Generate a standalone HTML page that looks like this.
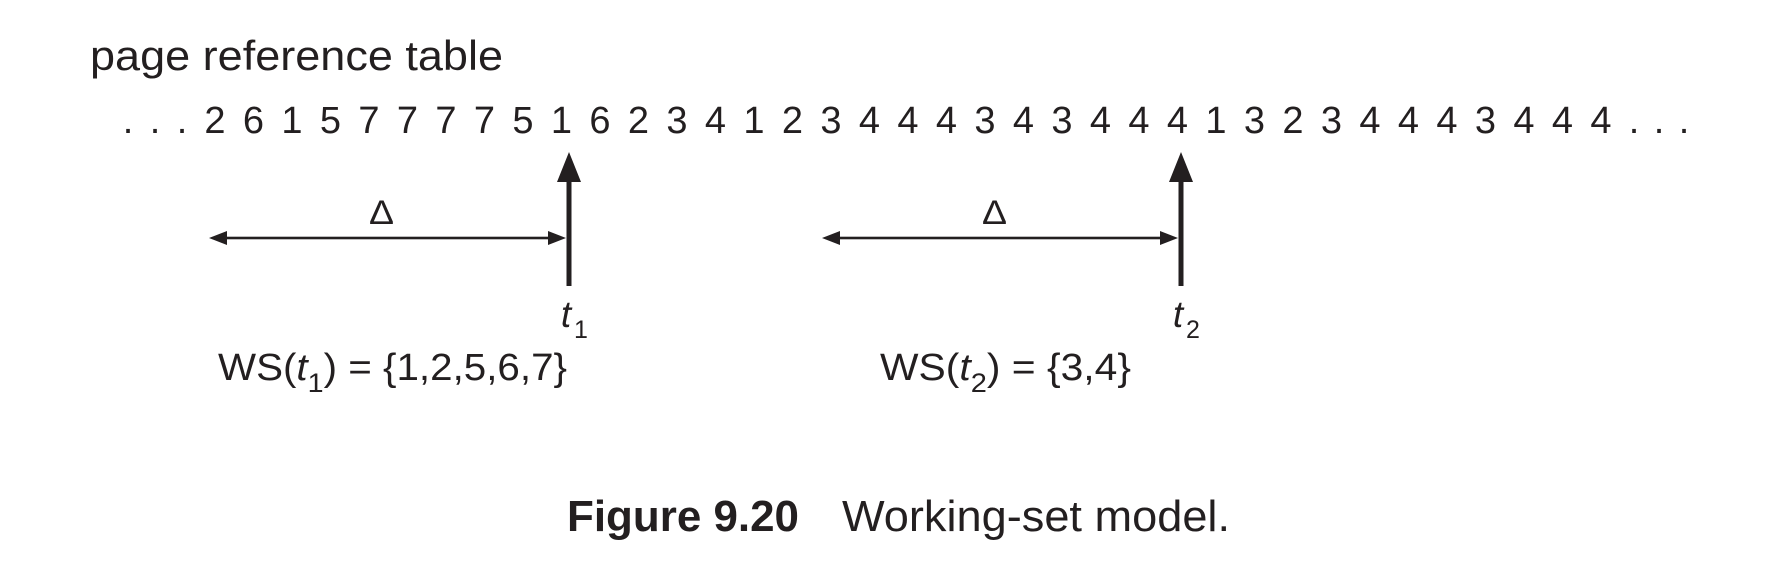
<!DOCTYPE html>
<html><head><meta charset="utf-8"><style>
html,body{margin:0;padding:0;background:#fff;width:1774px;height:584px;overflow:hidden}
svg{display:block}
text{font-family:"Liberation Sans",sans-serif;fill:#231f20}
</style></head><body>
<svg width="1774" height="584" viewBox="0 0 1774 584" xmlns="http://www.w3.org/2000/svg">
<text x="90" y="70" font-size="42" textLength="413" lengthAdjust="spacingAndGlyphs">page reference table</text>
<g font-size="38" text-anchor="middle">
<text x="128" y="133">.</text><text x="155" y="133">.</text><text x="182" y="133">.</text>
<text x="215" y="133">2</text><text x="253.5" y="133">6</text><text x="292" y="133">1</text><text x="330.5" y="133">5</text><text x="369" y="133">7</text><text x="407.5" y="133">7</text><text x="446" y="133">7</text><text x="484.5" y="133">7</text><text x="523" y="133">5</text><text x="561.5" y="133">1</text><text x="600" y="133">6</text><text x="638.5" y="133">2</text><text x="677" y="133">3</text><text x="715.5" y="133">4</text><text x="754" y="133">1</text><text x="792.5" y="133">2</text><text x="831" y="133">3</text><text x="869.5" y="133">4</text><text x="908" y="133">4</text><text x="946.5" y="133">4</text><text x="985" y="133">3</text><text x="1023.5" y="133">4</text><text x="1062" y="133">3</text><text x="1100.5" y="133">4</text><text x="1139" y="133">4</text><text x="1177.5" y="133">4</text><text x="1216" y="133">1</text><text x="1254.5" y="133">3</text><text x="1293" y="133">2</text><text x="1331.5" y="133">3</text><text x="1370" y="133">4</text><text x="1408.5" y="133">4</text><text x="1447" y="133">4</text><text x="1485.5" y="133">3</text><text x="1524" y="133">4</text><text x="1562.5" y="133">4</text><text x="1601" y="133">4</text>
<text x="1634" y="133">.</text><text x="1659" y="133">.</text><text x="1684" y="133">.</text>
</g>
<g fill="#231f20" stroke="none">
<rect x="566.5" y="178" width="5" height="108"/>
<polygon points="569,152 557,182 581,182"/>
<rect x="1178.5" y="178" width="5" height="108"/>
<polygon points="1181,152 1169,182 1193,182"/>
<rect x="222" y="236.7" width="330" height="2.6"/>
<polygon points="209,238 227,231 227,245"/>
<polygon points="566,238 548,231 548,245"/>
<rect x="835" y="236.7" width="330" height="2.6"/>
<polygon points="822,238 840,231 840,245"/>
<polygon points="1178,238 1160,231 1160,245"/>
</g>
<text x="369" y="224" font-size="34" textLength="25" lengthAdjust="spacingAndGlyphs">Δ</text>
<text x="982" y="224" font-size="34" textLength="25" lengthAdjust="spacingAndGlyphs">Δ</text>
<text x="566" y="327" font-size="37" font-style="italic" text-anchor="middle">t</text>
<text x="581" y="338" font-size="25" text-anchor="middle">1</text>
<text x="1178" y="327" font-size="37" font-style="italic" text-anchor="middle">t</text>
<text x="1193" y="338" font-size="25" text-anchor="middle">2</text>
<text x="218" y="380" font-size="38" textLength="349" lengthAdjust="spacingAndGlyphs">WS(<tspan font-style="italic">t</tspan><tspan font-size="27" dy="12">1</tspan><tspan dy="-12">) = {1,2,5,6,7}</tspan></text>
<text x="880" y="380" font-size="38" textLength="251" lengthAdjust="spacingAndGlyphs">WS(<tspan font-style="italic">t</tspan><tspan font-size="27" dy="12">2</tspan><tspan dy="-12">) = {3,4}</tspan></text>
<text x="567" y="531" font-size="44" font-weight="bold" textLength="232" lengthAdjust="spacingAndGlyphs">Figure 9.20</text>
<text x="842" y="531" font-size="44" textLength="388" lengthAdjust="spacingAndGlyphs">Working-set model.</text>
</svg>
</body></html>
